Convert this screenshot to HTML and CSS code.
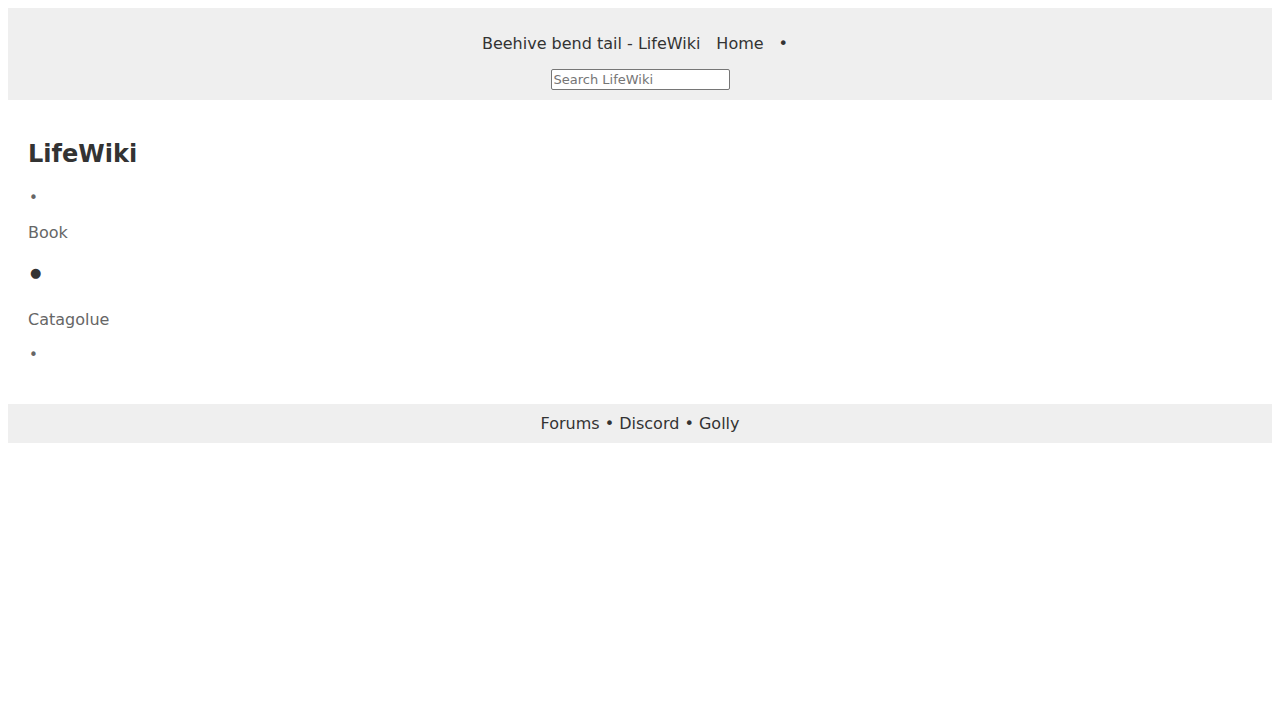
FILE: index.html
```html
<!DOCTYPE html>
<html>
<head>
<meta charset="utf-8">
<title>Beehive bend tail - LifeWiki</title>
<link rel="stylesheet" href="styles.css">
</head>
<body>
<header class="top">
  <div class="top-line">
    <span class="page-title">Beehive bend tail - LifeWiki</span>
    <a class="top-link" href="#">Home</a>
    <span class="top-sep">•</span>
  </div>
  <div class="search-row">
    <input class="search" type="text" placeholder="Search LifeWiki">
  </div>
</header>
<main class="content">
  <h1 class="site-name">LifeWiki</h1>
  <ul class="nav">
    <li class="dot-small dot-first">•</li>
    <li class="nav-link link-book">Book</li>
    <li class="dot-big">●</li>
    <li class="nav-link link-cat">Catagolue</li>
    <li class="dot-small dot-last">•</li>
  </ul>
</main>
<footer class="bottom">
  <a href="#">Forums</a> • <a href="#">Discord</a> • <a href="#">Golly</a>
</footer>
</body>
</html>
```
FILE: styles.css
```css
body {
  margin: 8px;
  font-family: "DejaVu Sans", sans-serif;
  color: #333;
  font-size: 16px;
}
a { color: #333; text-decoration: none; }
.top {
  background: #efefef;
  padding: 26px 0 10px;
  text-align: center;
}
.top-line {
  line-height: 19px;
  display: flex;
  justify-content: center;
  gap: 16px;
  padding-right: 10px;
}
.top-sep { margin-left: -1px; }
.search-row { margin-top: 16px; line-height: 0; }
.search {
  width: 173px;
  height: 17px;
  padding: 1px 2px;
  border: 1px solid #767676;
  border-radius: 2px;
  font-family: "DejaVu Sans", sans-serif;
  font-size: 13px;
}
.content {
  padding: 20px 20px 41px;
}
.site-name {
  font-size: 24px;
  margin: 20px 0 0;
  line-height: 28px;
}
.nav {
  list-style: none;
  margin: 0;
  padding: 0;
  display: flex;
  flex-direction: column;
}
.dot-small { color: #666; font-size: 15px; line-height: 16px; padding-left: 1px; }
.nav-link { color: #666; line-height: 19px; }
.dot-big { color: #333; font-size: 13px; line-height: 19px; padding-left: 2px; }
.dot-first { margin-top: 22px; }
.link-book { margin-top: 17px; }
.dot-big { margin-top: 21px; }
.link-cat { margin-top: 28px; }
.dot-last { margin-top: 18px; }
.bottom {
  background: #efefef;
  text-align: center;
  padding: 10px 0;
  line-height: 19px;
}
```
